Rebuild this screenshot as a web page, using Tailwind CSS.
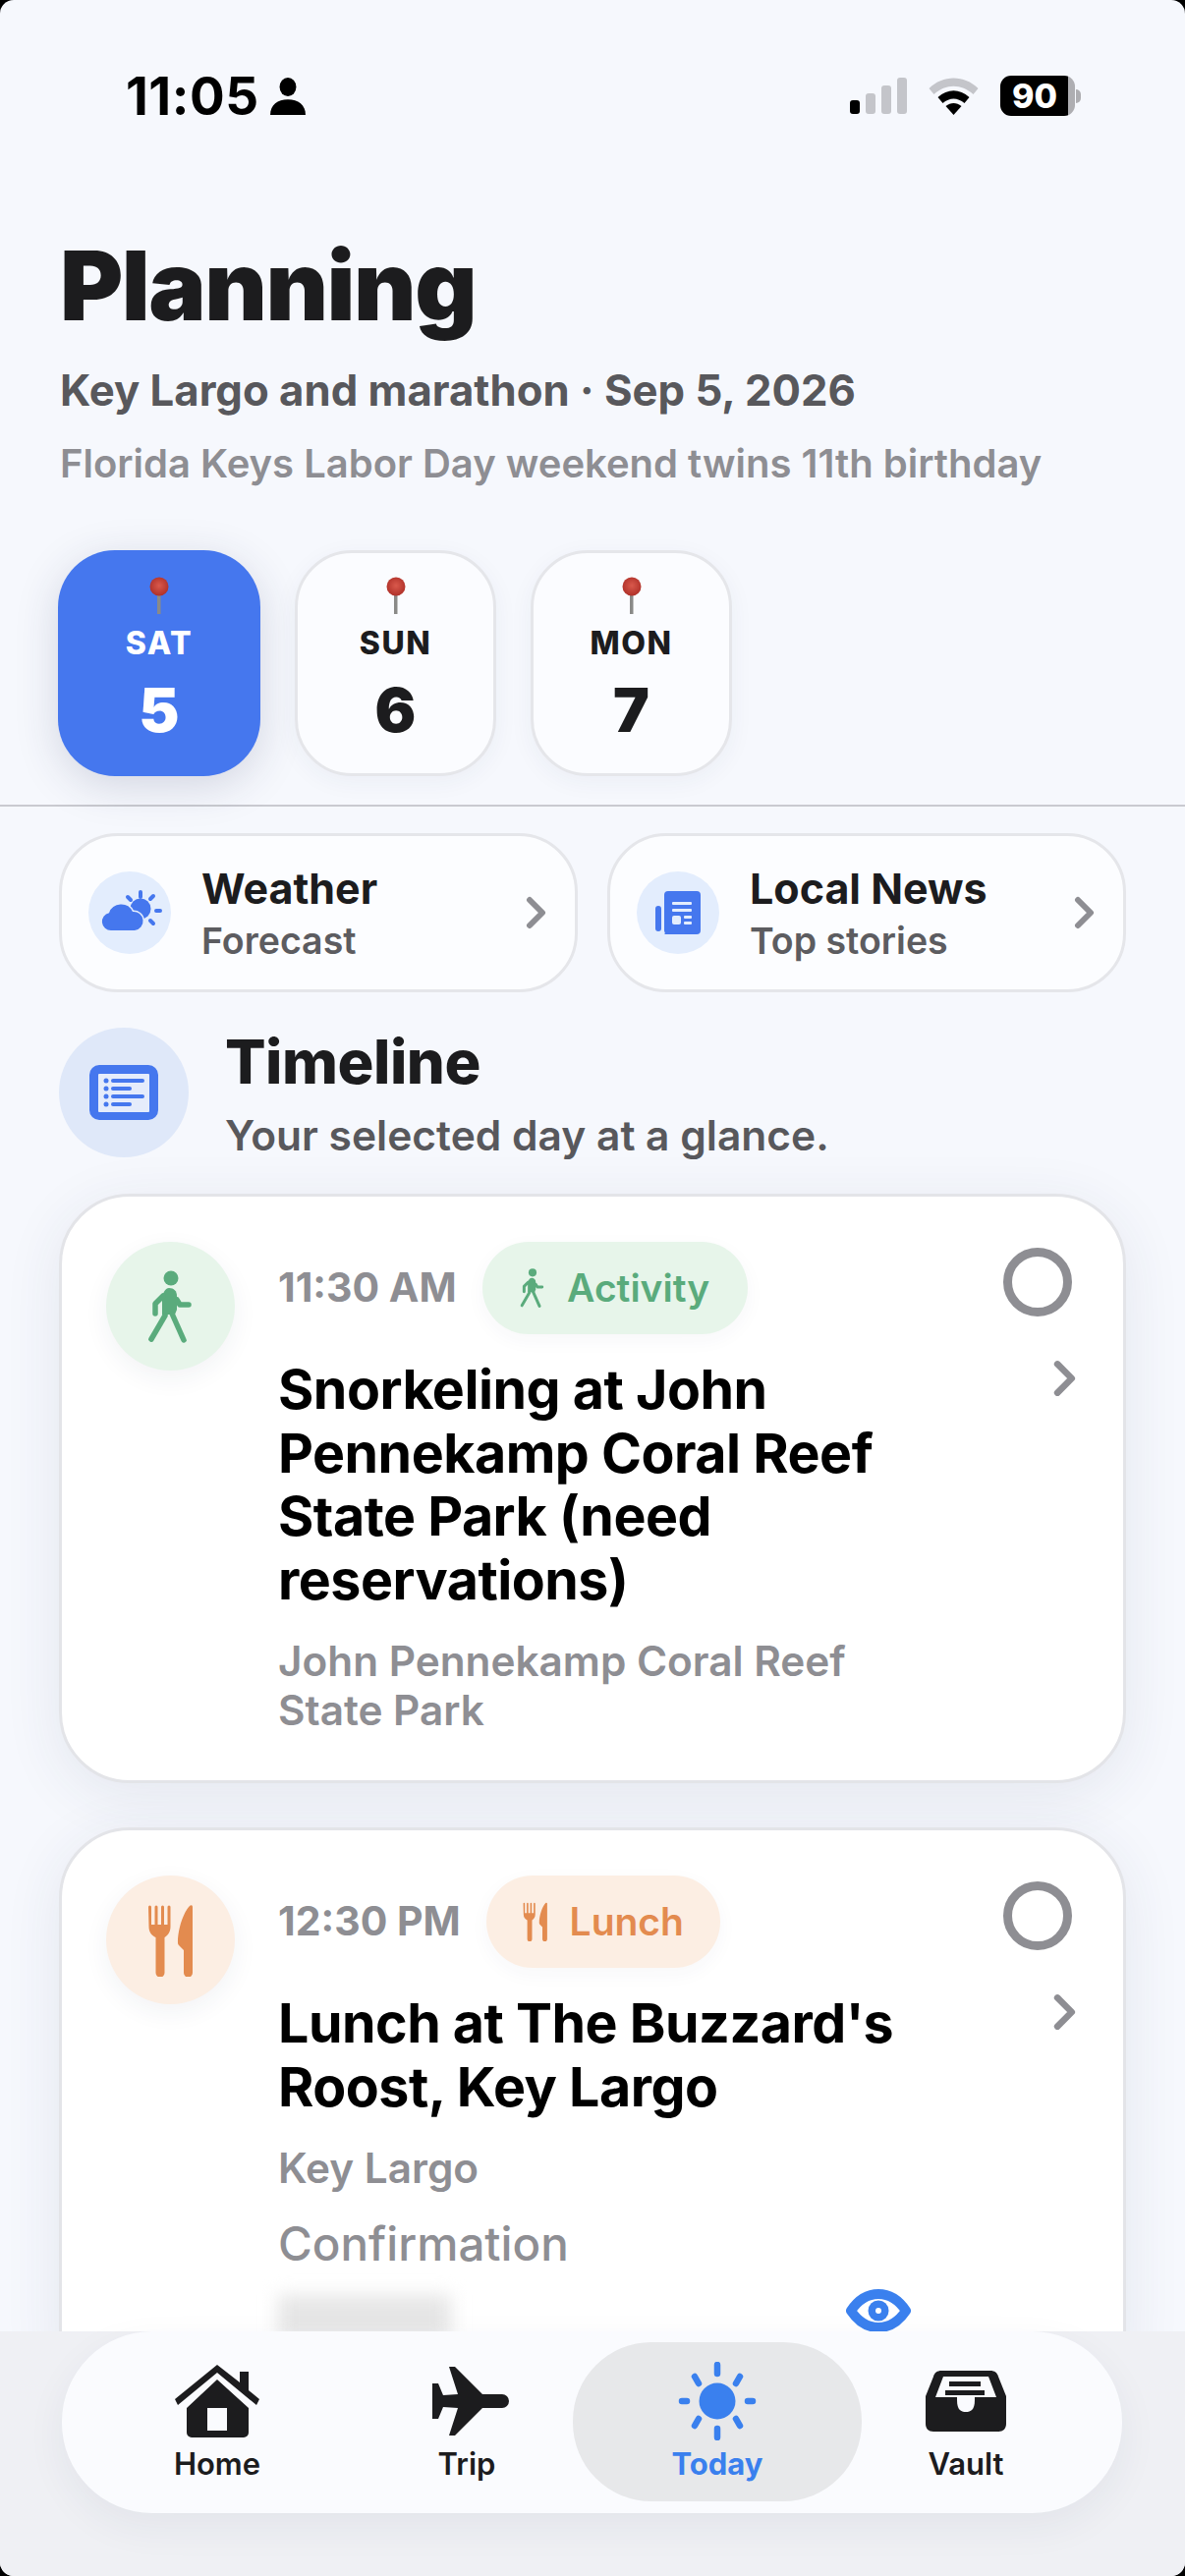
<!DOCTYPE html>
<html lang="en">
<head>
    <meta charset="UTF-8">
    <title>Planning</title>
    <script src="https://cdn.jsdelivr.net/npm/@tailwindcss/browser@4"></script>
</head>
<body class="bg-black">
    <div class="w-[1206px] h-[2622px] flex flex-col overflow-hidden rounded-[14px] bg-[#f6f8fd] font-['Inter',sans-serif]">

        <!-- Status bar -->
        <div class="h-[131px] pt-[74px] pl-[128px] pr-[106px] flex justify-between items-start shrink-0">
            <div class="flex items-center gap-[11px] text-[53px] leading-[48px] font-bold text-black tracking-[0.5px]">
                <span>11:05</span>
                <svg width="36" height="38" viewBox="0 0 34 36" fill="#000"><ellipse cx="17" cy="9" rx="8" ry="9"/><path d="M0 36c0-10 7-15 17-15s17 5 17 15z"/></svg>
            </div>
            <div class="flex items-center gap-[22px] pt-[3px]">
                <svg width="58" height="38" viewBox="0 0 58 38"><rect x="0" y="23" width="10" height="14" rx="3" fill="#000"/><rect x="16" y="16" width="10" height="21" rx="3" fill="#c4c5ca"/><rect x="32" y="8" width="10" height="29" rx="3" fill="#c4c5ca"/><rect x="48" y="0" width="10" height="37" rx="3" fill="#c4c5ca"/></svg>
                <svg width="51" height="38" viewBox="0 0 50 38"><path d="M0 11C14-3 36-3 50 11l-5 6C33 6 17 6 5 17z" fill="#c4c5ca"/><path d="M9 20c10-9 22-9 32 0l-5 6c-7-6-15-6-22 0z" fill="#000"/><path d="M17 29c5-4 11-4 16 0l-8 9z" fill="#000"/></svg>
                <div class="flex items-center">
                    <div class="w-[76px] h-[41px] rounded-[11px] bg-[linear-gradient(90deg,#000_0,#000_91%,#aeaeb2_91%)] text-white text-[34px] leading-[41px] font-extrabold pl-[12px]">90</div>
                    <div class="w-[5px] h-[14px] rounded-r-full bg-[#aeaeb2] ml-[1px]"></div>
                </div>
            </div>
        </div>

        <!-- Scrolling area -->
        <div class="flex-1 min-h-0 overflow-hidden">
            <!-- Header -->
            <div class="px-[61px]">
                <h1 class="text-[98px] leading-[100px] mt-[110px] font-black text-[#1c1c1e] tracking-[-1.5px]">Planning</h1>
                <p class="mt-[32px] text-[43.7px] leading-[50px] font-bold text-[#58585c]">Key Largo and marathon · Sep 5, 2026</p>
                <p class="mt-[25px] text-[40px] leading-[48px] font-semibold text-[#8e8e93]">Florida Keys Labor Day weekend twins 11th birthday</p>
            </div>

            <!-- Day selector -->
            <div class="flex gap-[35px] px-[59px] mt-[64px] h-[230px]">
                <div class="w-[206px] h-[230px] rounded-[58px] bg-[#4577ee] shadow-[0_10px_44px_rgba(40,50,90,0.17)] flex flex-col items-center text-white">
                    <svg class="mt-[27px]" width="22" height="38" viewBox="0 0 22 38"><defs><radialGradient id="pinA" cx="0.5" cy="0.45" r="0.6"><stop offset="0" stop-color="#d9594c"/><stop offset="1" stop-color="#ac2d26"/></radialGradient></defs><rect x="9" y="16" width="3.5" height="22" fill="#8a8a88"/><circle cx="11" cy="10" r="9.5" fill="url(#pinA)"/></svg>
                    <span class="mt-[13px] text-[32px] leading-[34px] font-extrabold tracking-[1.5px]">SAT</span>
                    <span class="mt-[19px] text-[62px] leading-[64px] font-black">5</span>
                </div>
                <div class="w-[205px] h-[230px] rounded-[58px] bg-[#fbfcff] border-[3px] border-[#e5e6ea] shadow-[0_6px_24px_rgba(40,50,90,0.05)] flex flex-col items-center text-[#1c1c1e]">
                    <svg class="mt-[24px]" width="22" height="38" viewBox="0 0 22 38"><defs><radialGradient id="pinB" cx="0.5" cy="0.45" r="0.6"><stop offset="0" stop-color="#d9594c"/><stop offset="1" stop-color="#ac2d26"/></radialGradient></defs><rect x="9" y="16" width="3.5" height="22" fill="#8a8a88"/><circle cx="11" cy="10" r="9.5" fill="url(#pinB)"/></svg>
                    <span class="mt-[13px] text-[32px] leading-[34px] font-extrabold tracking-[1.5px]">SUN</span>
                    <span class="mt-[19px] text-[62px] leading-[64px] font-black">6</span>
                </div>
                <div class="w-[205px] h-[230px] rounded-[58px] bg-[#fbfcff] border-[3px] border-[#e5e6ea] shadow-[0_6px_24px_rgba(40,50,90,0.05)] flex flex-col items-center text-[#1c1c1e]">
                    <svg class="mt-[24px]" width="22" height="38" viewBox="0 0 22 38"><defs><radialGradient id="pinC" cx="0.5" cy="0.45" r="0.6"><stop offset="0" stop-color="#d9594c"/><stop offset="1" stop-color="#ac2d26"/></radialGradient></defs><rect x="9" y="16" width="3.5" height="22" fill="#8a8a88"/><circle cx="11" cy="10" r="9.5" fill="url(#pinC)"/></svg>
                    <span class="mt-[13px] text-[32px] leading-[34px] font-extrabold tracking-[1.5px]">MON</span>
                    <span class="mt-[19px] text-[62px] leading-[64px] font-black">7</span>
                </div>
            </div>

            <div class="h-[2px] bg-[#c9cad0] mt-[29px]"></div>

            <!-- Weather / news -->
            <div class="grid grid-cols-2 gap-[30px] px-[60px] mt-[27px]">
                <div class="h-[162px] rounded-[60px] bg-[#fcfdff] border-[3px] border-[#e5e6ea] flex items-center pl-[27px] pr-[28px]">
                    <svg class="shrink-0" width="84" height="84" viewBox="0 0 84 84"><circle cx="42" cy="42" r="42" fill="#e3edfd"/><circle cx="53" cy="38" r="10.500" fill="#4577ee"/><g stroke="#4577ee" stroke-width="4" stroke-linecap="round"><path d="M53 21v5M69 40h4M63 28l3-3M40 26l3 3M63 50l3 3"/></g><path d="M23 60a9 9 0 0 1-2-17.800A13 13 0 0 1 45 41a9.500 9.500 0 0 1 2 19z" fill="#4577ee" stroke="#e3edfd" stroke-width="3" paint-order="stroke"/></svg>
                    <div class="ml-[31px] flex-1">
                        <div class="text-[43px] leading-[50px] font-bold text-[#1c1c1e]">Weather</div>
                        <div class="text-[37.5px] leading-[44px] mt-[7px] font-semibold text-[#5c5c60]">Forecast</div>
                    </div>
                    <svg width="22" height="34" viewBox="0 0 22 34" fill="none" stroke="#8e8e93" stroke-width="6" stroke-linecap="round" stroke-linejoin="round"><path d="M4 4l13 13L4 30"/></svg>
                </div>
                <div class="h-[162px] rounded-[60px] bg-[#fcfdff] border-[3px] border-[#e5e6ea] flex items-center pl-[27px] pr-[28px]">
                    <div class="w-[84px] h-[84px] rounded-full bg-[#e3edfd] flex items-center justify-center shrink-0">
                        <svg width="46" height="44" viewBox="0 0 46 44" fill="#4577ee"><rect x="0" y="15" width="6" height="26" rx="3"/><path d="M13 0h29a4 4 0 0 1 4 4v36a4 4 0 0 1-4 4H9c2-1 0-2 0-4V4a4 4 0 0 1 4-4z"/><g fill="#e3edfd"><rect x="17" y="11" width="20" height="3" rx="1"/><rect x="17" y="18" width="20" height="3" rx="1"/><rect x="17" y="25" width="9" height="9" rx="2"/><rect x="29" y="25" width="8" height="3" rx="1"/><rect x="29" y="31" width="8" height="3" rx="1"/></g></svg>
                    </div>
                    <div class="ml-[31px] flex-1">
                        <div class="text-[43px] leading-[50px] font-bold text-[#1c1c1e]">Local News</div>
                        <div class="text-[37.5px] leading-[44px] mt-[7px] font-semibold text-[#5c5c60]">Top stories</div>
                    </div>
                    <svg width="22" height="34" viewBox="0 0 22 34" fill="none" stroke="#8e8e93" stroke-width="6" stroke-linecap="round" stroke-linejoin="round"><path d="M4 4l13 13L4 30"/></svg>
                </div>
            </div>

            <!-- Timeline heading -->
            <div class="flex items-center px-[60px] mt-[33px]">
                <div class="w-[132px] h-[132px] rounded-full bg-[#dfe8f9] flex items-center justify-center shrink-0">
                    <svg width="70" height="56" viewBox="0 0 70 56"><rect width="70" height="56" rx="10" fill="#4577ee"/><rect x="9" y="9" width="52" height="39" rx="1" fill="#e5ecfb"/><g fill="#4577ee"><circle cx="17" cy="16" r="2.500"/><circle cx="17" cy="24" r="2.500"/><circle cx="17" cy="32" r="2.500"/><circle cx="17" cy="40" r="2.500"/><rect x="22" y="14" width="34" height="4" rx="2"/><rect x="22" y="22" width="21" height="4" rx="2"/><rect x="22" y="30" width="34" height="4" rx="2"/><rect x="22" y="38" width="21" height="4" rx="2"/></g></svg>
                </div>
                <div class="ml-[37px] pt-[5px]">
                    <div class="text-[61.5px] leading-[66px] font-extrabold text-[#1c1c1e] tracking-[-0.5px]">Timeline</div>
                    <div class="text-[42.5px] leading-[50px] mt-[17px] font-semibold text-[#58585c]">Your selected day at a glance.</div>
                </div>
            </div>

            <!-- Timeline cards -->
            <div class="flex flex-col gap-[45px] px-[60px] mt-[34px]">
                <div class="rounded-[72px] bg-white border-[3px] border-[#e3e4e8] shadow-[0_12px_60px_rgba(40,50,90,0.09)] flex pt-[46px] pl-[45px] pr-[52px] pb-[46px]">
                    <div class="w-[131px] h-[131px] rounded-full bg-[#e7f5ea] shadow-[0_8px_26px_rgba(40,50,90,0.06)] flex items-center justify-center shrink-0">
                        <svg width="46" height="74" viewBox="0 0 46 74" fill="#5aab7c"><circle cx="23" cy="8" r="7.500"/><path d="M21 18c5 0 8 3 8 8v14l-2 5H14V30c0-6 3-12 7-12z"/><g fill="none" stroke="#5aab7c" stroke-width="5.500" stroke-linecap="round" stroke-linejoin="round"><path d="M15 26l-8 8v10"/><path d="M29 30l3 5h9"/><path d="M17 46L3 70"/><path d="M24 44l12 27"/></g></svg>
                    </div>
                    <div class="ml-[44px] flex-1 min-w-0">
                        <div class="flex items-center h-[94px]">
                            <span class="text-[41px] font-bold text-[#8e8e93]">11:30 AM</span>
                            <span class="ml-[26px] h-[94px] w-[270px] rounded-[47px] bg-[#e7f5ea] shadow-[0_6px_20px_rgba(40,50,90,0.04)] flex items-center justify-center gap-[22px] text-[39px] font-semibold text-[#5aab7c]">
                                <svg width="26" height="40" viewBox="0 0 46 74" fill="#5aab7c"><circle cx="23" cy="8" r="7.500"/><path d="M21 18c5 0 8 3 8 8v14l-2 5H14V30c0-6 3-12 7-12z"/><g fill="none" stroke="#5aab7c" stroke-width="5.500" stroke-linecap="round" stroke-linejoin="round"><path d="M15 26l-8 8v10"/><path d="M29 30l3 5h9"/><path d="M17 46L3 70"/><path d="M24 44l12 27"/></g></svg>
                                Activity
                            </span>
                        </div>
                        <h3 class="mt-[24px] text-[55.5px] leading-[64.500px] font-bold text-black tracking-[-0.5px] w-[640px]">Snorkeling at John Pennekamp Coral Reef State Park (need reservations)</h3>
                        <p class="mt-[26px] text-[42.3px] leading-[50px] font-semibold text-[#8e8e93] w-[640px]">John Pennekamp Coral Reef State Park</p>
                    </div>
                    <div class="flex flex-col items-end shrink-0 pt-[6px]">
                        <div class="w-[70px] h-[70px] rounded-full border-[9px] border-[#8e8e93]"></div>
                        <svg class="mt-[44px] mr-[-6px]" width="26" height="38" viewBox="0 0 22 34" fill="none" stroke="#8e8e93" stroke-width="6" stroke-linecap="round" stroke-linejoin="round"><path d="M4 4l13 13L4 30"/></svg>
                    </div>
                </div>

                <div class="rounded-[72px] bg-white border-[3px] border-[#e3e4e8] shadow-[0_12px_60px_rgba(40,50,90,0.09)] flex pt-[46px] pl-[45px] pr-[52px] pb-[46px]">
                    <div class="w-[131px] h-[131px] rounded-full bg-[#fceee3] shadow-[0_8px_26px_rgba(40,50,90,0.06)] flex items-center justify-center shrink-0">
                        <svg width="46" height="74" viewBox="0 0 46 74" fill="#e38b4f"><path d="M0 3a1.500 1.500 0 0 1 3 0v18h3.500V3a1.500 1.500 0 0 1 3 0v18H13V3a1.500 1.500 0 0 1 3 0v18H19.500V3a1.500 1.500 0 0 1 3 0v20c0 6-3 9-6 11v36a4.500 4.500 0 0 1-9 0V34c-4-2-7-5-7-11z"/><path d="M45 3v67a4.500 4.500 0 0 1-9 0V47l-5-5c-1-1-1-2-1-3 0-14 6-31 12-37 1-1 3-1 3 1z"/></svg>
                    </div>
                    <div class="ml-[44px] flex-1 min-w-0">
                        <div class="flex items-center h-[94px]">
                            <span class="text-[41px] font-bold text-[#8e8e93]">12:30 PM</span>
                            <span class="ml-[26px] h-[94px] w-[238px] rounded-[47px] bg-[#fceee3] shadow-[0_6px_20px_rgba(40,50,90,0.04)] flex items-center justify-center gap-[22px] text-[39px] font-semibold text-[#e38b4f]">
                                <svg width="26" height="40" viewBox="0 0 46 74" fill="#e38b4f"><path d="M0 3a1.500 1.500 0 0 1 3 0v18h3.500V3a1.500 1.500 0 0 1 3 0v18H13V3a1.500 1.500 0 0 1 3 0v18H19.500V3a1.500 1.500 0 0 1 3 0v20c0 6-3 9-6 11v36a4.500 4.500 0 0 1-9 0V34c-4-2-7-5-7-11z"/><path d="M45 3v67a4.500 4.500 0 0 1-9 0V47l-5-5c-1-1-1-2-1-3 0-14 6-31 12-37 1-1 3-1 3 1z"/></svg>
                                Lunch
                            </span>
                        </div>
                        <h3 class="mt-[24px] text-[55.5px] leading-[64.500px] font-bold text-black tracking-[-0.5px] w-[640px]">Lunch at The Buzzard's Roost, Key Largo</h3>
                        <p class="mt-[26px] text-[42.3px] leading-[50px] font-semibold text-[#8e8e93]">Key Largo</p>
                        <p class="mt-[23px] text-[47.5px] leading-[58px] font-medium text-[#8e8e93]">Confirmation</p>
                        <div class="flex justify-between items-start mt-[17px] h-[70px]">
                            <div class="w-[176px] h-[44px] mt-[6px] bg-[#e6e6e6] blur-[9px]"></div>
                            <svg class="mr-[94px]" width="66" height="44" viewBox="0 0 66 44"><path d="M5 22C13 10 22 5 33 5s20 5 28 17c-8 12-17 17-28 17S13 34 5 22z" fill="none" stroke="#3a80ee" stroke-width="10" stroke-linejoin="round"/><circle cx="33" cy="22" r="10.500" fill="#3a80ee"/><circle cx="33" cy="22" r="3" fill="#fff"/></svg>
                        </div>
                    </div>
                    <div class="flex flex-col items-end shrink-0 pt-[6px]">
                        <div class="w-[70px] h-[70px] rounded-full border-[9px] border-[#8e8e93]"></div>
                        <svg class="mt-[44px] mr-[-6px]" width="26" height="38" viewBox="0 0 22 34" fill="none" stroke="#8e8e93" stroke-width="6" stroke-linecap="round" stroke-linejoin="round"><path d="M4 4l13 13L4 30"/></svg>
                    </div>
                </div>
            </div>
        </div>

        <!-- Bottom nav -->
        <div class="h-[249px] shrink-0 bg-[#eff0f4] pl-[63px] pr-[64px] relative z-10">
            <div class="h-[185px] rounded-[92px] bg-[#fafbfe] shadow-[0_14px_40px_rgba(40,50,90,0.06)] flex items-start pl-[99px] pt-[31px]">
                <div class="w-[118px] flex flex-col items-center">
                    <div class="h-[80px] flex items-center">
                        <svg width="86" height="74" viewBox="0 0 86 74" fill="#1c1c1e"><path d="M12 44L43 15l32 29v25a5 5 0 0 1-5 5H17a5 5 0 0 1-5-5zM33 44v23h20V44z" fill-rule="evenodd"/><path d="M0 35L43 0l23 18V7h9v19l11 9-3 6L43 8 3 41z"/></svg>
                    </div>
                    <span class="mt-[6px] text-[31px] leading-[36px] font-semibold text-[#1c1c1e]">Home</span>
                </div>
                <div class="ml-[136px] w-[118px] flex flex-col items-center">
                    <div class="h-[80px] flex items-center ml-[8px]">
                        <svg width="80" height="70" viewBox="0 0 80 70" fill="#1c1c1e"><path d="M18 0h6L52 28h20a7 7 0 0 1 0 14H52L24 70h-6l9-28-15-1-5 12H1V35 17h6l5 12 15-1z"/></svg>
                    </div>
                    <span class="mt-[6px] text-[31px] leading-[36px] font-semibold text-[#1c1c1e]">Trip</span>
                </div>
                <div class="ml-[49px] mt-[-20px] w-[294px] h-[162px] rounded-[80px] bg-[#e7e8ea] flex flex-col items-center pt-[20px]">
                    <div class="h-[80px] flex items-center">
                        <svg width="80" height="80" viewBox="0 0 80 80" fill="#3a80ee"><circle cx="40" cy="40" r="18.500"/><g stroke="#3a80ee" stroke-width="6.500" stroke-linecap="round"><path d="M40 3v9M40 68v9M4 40h5M71 40h5M17 15l4 7M63 15l-4 7M17 65l4-7M63 65l-4-7"/></g></svg>
                    </div>
                    <span class="mt-[6px] text-[31px] leading-[36px] font-bold text-[#3a80ee]">Today</span>
                </div>
                <div class="ml-[47px] w-[118px] flex flex-col items-center">
                    <div class="h-[80px] flex items-center">
                        <svg width="82" height="62" viewBox="0 0 82 62" fill="#1c1c1e"><path d="M16 0h50c4 0 7 2 8 6l8 20v28c0 5-3 8-8 8H8c-5 0-8-3-8-8V26L8 6c1-4 4-6 8-6z"/><path d="M18 6h46l8 21H50v3c0 10-4 12-9 12s-9-2-9-12v-3H10z" fill="#fafbfe"/><rect x="24" y="11" width="32" height="5" fill="#1c1c1e"/><rect x="20" y="20" width="40" height="5" fill="#1c1c1e"/></svg>
                    </div>
                    <span class="mt-[6px] text-[31px] leading-[36px] font-semibold text-[#1c1c1e]">Vault</span>
                </div>
            </div>
        </div>
    </div>
</body>
</html>
